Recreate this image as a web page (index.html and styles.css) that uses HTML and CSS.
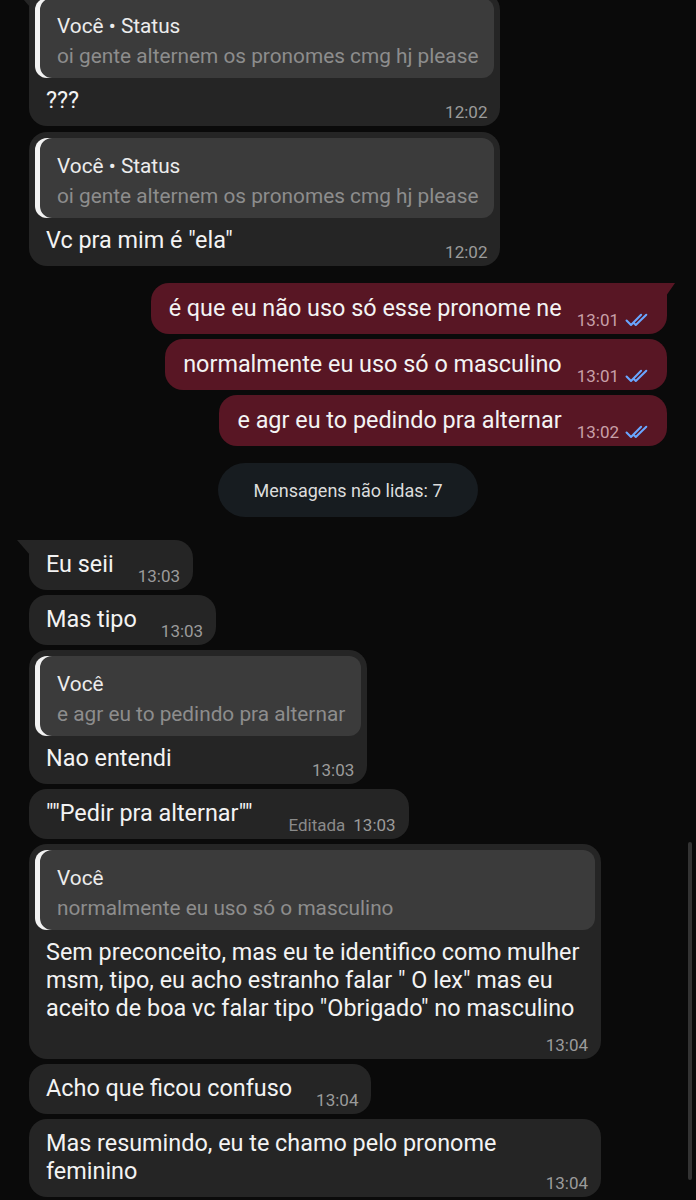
FILE: index.html
```html
<!DOCTYPE html>
<html lang="pt">
<head>
<meta charset="utf-8">
<title>Chat</title>
<link rel="stylesheet" href="styles.css">
</head>
<body>
<div class="chat">

  <div class="bubble in tail-in">
    <div class="quote-wrap">
      <div class="quote">
        <div class="q-title">Você • Status</div>
        <div class="q-text">oi gente alternem os pronomes cmg hj please</div>
      </div>
    </div>
    <div class="row row-q split">
      <span class="text">???</span>
      <span class="time">12:02</span>
    </div>
  </div>

  <div class="bubble in second">
    <div class="quote-wrap">
      <div class="quote">
        <div class="q-title">Você • Status</div>
        <div class="q-text">oi gente alternem os pronomes cmg hj please</div>
      </div>
    </div>
    <div class="row row-q split">
      <span class="text">Vc pra mim é "ela"</span>
      <span class="time">12:02</span>
    </div>
  </div>

  <div class="bubble out tail-out spaced">
    <div class="row">
      <span class="text">é que eu não uso só esse pronome ne</span>
      <span class="time">13:01</span>
      <svg class="ticks" viewBox="0 0 26 13" width="27" height="14"><path d="M1.5 7 L5.8 11.3 L15.5 1.5 M8.6 9.5 L10.4 11.3 L20.5 1.5"/></svg>
    </div>
  </div>

  <div class="bubble out">
    <div class="row">
      <span class="text">normalmente eu uso só o masculino</span>
      <span class="time">13:01</span>
      <svg class="ticks" viewBox="0 0 26 13" width="27" height="14"><path d="M1.5 7 L5.8 11.3 L15.5 1.5 M8.6 9.5 L10.4 11.3 L20.5 1.5"/></svg>
    </div>
  </div>

  <div class="bubble out">
    <div class="row">
      <span class="text">e agr eu to pedindo pra alternar</span>
      <span class="time">13:02</span>
      <svg class="ticks" viewBox="0 0 26 13" width="27" height="14"><path d="M1.5 7 L5.8 11.3 L15.5 1.5 M8.6 9.5 L10.4 11.3 L20.5 1.5"/></svg>
    </div>
  </div>

  <div class="pill">Mensagens não lidas: 7</div>

  <div class="bubble in tail-in">
    <div class="row">
      <span class="text">Eu seii</span>
      <span class="time">13:03</span>
    </div>
  </div>

  <div class="bubble in">
    <div class="row">
      <span class="text">Mas tipo</span>
      <span class="time">13:03</span>
    </div>
  </div>

  <div class="bubble in">
    <div class="quote-wrap">
      <div class="quote">
        <div class="q-title">Você</div>
        <div class="q-text">e agr eu to pedindo pra alternar</div>
      </div>
    </div>
    <div class="row row-q split">
      <span class="text">Nao entendi</span>
      <span class="time">13:03</span>
    </div>
  </div>

  <div class="bubble in">
    <div class="row">
      <span class="text">""Pedir pra alternar""</span>
      <span class="edited">Editada</span>
      <span class="time">13:03</span>
    </div>
  </div>

  <div class="bubble in wide">
    <div class="quote-wrap">
      <div class="quote">
        <div class="q-title">Você</div>
        <div class="q-text">normalmente eu uso só o masculino</div>
      </div>
    </div>
    <div class="block">
      <p class="para">Sem preconceito, mas eu te identifico como mulher msm, tipo, eu acho estranho falar " O lex" mas eu aceito de boa vc falar tipo "Obrigado" no masculino</p>
      <div class="time-line"><span class="time">13:04</span></div>
    </div>
  </div>

  <div class="bubble in">
    <div class="row">
      <span class="text">Acho que ficou confuso</span>
      <span class="time">13:04</span>
    </div>
  </div>

  <div class="bubble in">
    <div class="row">
      <span class="text">Mas resumindo, eu te chamo pelo pronome feminino</span>
      <span class="time">13:04</span>
    </div>
  </div>

</div>
<div class="scrollbar"></div>
</body>
</html>
```

FILE: styles.css
```css
html, body {
  margin: 0;
  padding: 0;
}

body {
  background: #0a0a0a;
  font-family: Roboto, "Noto Sans", "DejaVu Sans", sans-serif;
  color: #f2f2f2;
  width: 696px;
  height: 1200px;
  overflow: hidden;
  position: relative;
}

.chat {
  display: flex;
  flex-direction: column;
  gap: 5px;
  padding: 0 29px;
  margin-top: -8px;
}

.bubble {
  position: relative;
  max-width: 572px;
  border-radius: 18px;
  background: #252525;
}

.in {
  align-self: flex-start;
}

.out {
  align-self: flex-end;
  background: #581624;
}

.second {
  margin-top: 1px;
}

.spaced {
  margin-top: 12px;
}

.tail-in {
  border-top-left-radius: 0;
}

.tail-in::before {
  content: "";
  position: absolute;
  left: -12px;
  top: 0;
  width: 13px;
  height: 15px;
  background: inherit;
  clip-path: polygon(0 0, 100% 0, 100% 100%);
}

.tail-out {
  border-top-right-radius: 0;
}

.tail-out::before {
  content: "";
  position: absolute;
  right: -8px;
  top: 0;
  width: 9px;
  height: 13px;
  background: inherit;
  clip-path: polygon(0 0, 100% 0, 0 100%);
}

.row {
  display: flex;
  align-items: flex-end;
  padding: 10px 13px 4px 17px;
}

.out .row {
  padding: 11px 15px 4px 18px;
}

.row-q {
  padding-top: 8px;
}

.split {
  justify-content: space-between;
}

.text {
  font-size: 23.4px;
  line-height: 28px;
  margin-bottom: 8px;
  color: #f3f3f3;
}

.time {
  font-size: 17px;
  line-height: 20px;
  color: #9b9b9b;
  margin-left: 24px;
  white-space: nowrap;
  flex-shrink: 0;
}

.out .time {
  color: #c8a0a8;
  margin-left: 15px;
}

.edited {
  font-size: 17px;
  line-height: 20px;
  color: #8a8a8a;
  margin-left: 36px;
  white-space: nowrap;
  flex-shrink: 0;
}

.edited + .time {
  margin-left: 8px;
}

.ticks {
  flex-shrink: 0;
  margin-left: 6px;
  margin-bottom: 3px;
  fill: none;
  stroke: #69a6ff;
  stroke-width: 2;
  stroke-linecap: round;
  stroke-linejoin: round;
}

.quote-wrap {
  padding: 6px 6px 0 6px;
}

.quote {
  background: #3b3b3b;
  border-radius: 12px;
  box-shadow: inset 5px 0 0 #f2f2f2;
  padding: 13px 16px 7px 22px;
}

.q-title {
  font-size: 20.8px;
  line-height: 30px;
  color: #ececec;
  white-space: nowrap;
}

.q-text {
  font-size: 20.8px;
  line-height: 30px;
  color: #8d8d8d;
  white-space: nowrap;
}

.block {
  padding: 8px 13px 4px 17px;
}

.para {
  margin: 0;
  font-size: 23.4px;
  line-height: 28px;
  color: #f3f3f3;
}

.time-line {
  display: flex;
  justify-content: flex-end;
  margin-top: 13px;
}

.time-line .time {
  margin-left: 0;
}

.pill {
  align-self: center;
  margin: 12px 0 18px;
  width: 260px;
  height: 54px;
  border-radius: 27px;
  background: #171c20;
  color: #dcdcdc;
  font-size: 18px;
  display: flex;
  align-items: center;
  justify-content: center;
}

.scrollbar {
  position: absolute;
  right: 4px;
  top: 842px;
  width: 4px;
  height: 338px;
  background: #333333;
  border-radius: 2px;
}
```
